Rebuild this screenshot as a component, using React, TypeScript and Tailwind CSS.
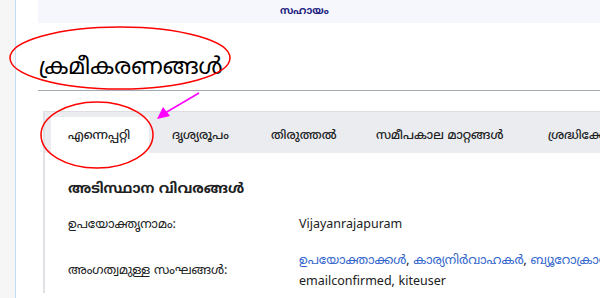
import React from "react";

const ml = { fontFamily: '"Noto Sans Malayalam", "Noto Sans", "DejaVu Sans", sans-serif' };

export default function App() {
  return (
    <div className="relative w-[600px] h-[298px] overflow-hidden bg-white flex" style={ml}>
      <div className="w-[16px] shrink-0 bg-[#f6f6f6] border-r border-[#c0dcf7]" />
      <div className="flex-1 flex flex-col pl-[22px] min-w-0">
        <div className="h-[23px] bg-[#f6f6fd] flex items-center pl-[242px] text-[10px] font-bold text-[#202080] leading-none">
          സഹായം
        </div>
        <div className="h-[68px] flex items-end pb-[10px] border-b border-[#a2a9b1]">
          <h1 className="text-[23px] font-normal leading-none text-black ml-[1px]">ക്രമീകരണങ്ങൾ</h1>
        </div>
        <div className="mt-[20px] ml-[5px] flex flex-col border-l-2 border-[#dfe1e5]">
          <div className="flex bg-[#eaecf0] border-t border-[#dcdee2] h-[42px] items-end pl-[6px] whitespace-nowrap text-[12px] font-medium text-[#202122]">
            <div className="h-[36px] w-[98px] shrink-0 bg-white flex items-center pt-[3px] pl-[17px]">എന്നെപ്പറ്റി</div>
            <div className="h-[36px] w-[102px] shrink-0 flex items-center pt-[3px] pl-[23px]">ദൃശ്യരൂപം</div>
            <div className="h-[36px] w-[105px] shrink-0 flex items-center pt-[3px] pl-[20px]">തിരുത്തൽ</div>
            <div className="h-[36px] w-[172px] shrink-0 flex items-center pt-[3px] pl-[20px]">സമീപകാല മാറ്റങ്ങൾ</div>
            <div className="h-[36px] shrink-0 flex items-center pt-[3px] pl-[20px]">ശ്രദ്ധിക്കേണ്ടവ</div>
          </div>
          <div className="pl-[23px] pt-[30px] text-[12.5px] text-[#202122]">
            <div className="text-[14px] font-bold leading-none">അടിസ്ഥാന വിവരങ്ങൾ</div>
            <div className="flex mt-[19px] leading-[18px]">
              <div className="w-[231px] shrink-0">ഉപയോക്തൃനാമം:</div>
              <div>Vijayanrajapuram</div>
            </div>
            <div className="flex mt-[17px] leading-[21px] whitespace-nowrap">
              <div className="w-[231px] shrink-0 pt-[10px]">അംഗത്വമുള്ള സംഘങ്ങൾ:</div>
              <div>
                <div className="text-[#3366cc]">
                  ഉപയോക്താക്കൾ<span className="text-[#202122]">, </span>കാര്യനിർവാഹകർ<span className="text-[#202122]">, </span>ബ്യൂറോക്രാറ്റുകൾ
                </div>
                <div>emailconfirmed, kiteuser</div>
              </div>
            </div>
          </div>
        </div>
      </div>
      <svg className="absolute inset-0 pointer-events-none" width="600" height="298" viewBox="0 0 600 298">
        <ellipse cx="120" cy="58" rx="110" ry="31" fill="none" stroke="#ff0000" strokeWidth="1.5" />
        <ellipse cx="97" cy="135" rx="56" ry="33" fill="none" stroke="#ff0000" strokeWidth="1.5" />
        <line x1="199" y1="93" x2="165" y2="113" stroke="#ff00ff" strokeWidth="1.5" />
        <polygon points="157,119 163,107 170,116" fill="#ff00ff" />
      </svg>
    </div>
  );
}
